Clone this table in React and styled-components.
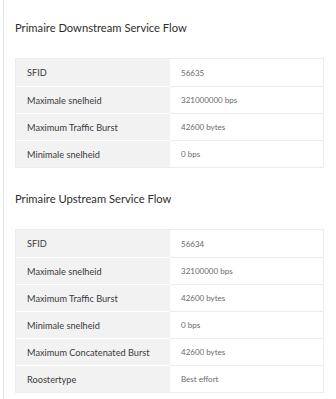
import React from "react";
import styled, { createGlobalStyle } from "styled-components";

const GlobalStyle = createGlobalStyle`
  html, body {
    margin: 0;
    padding: 0;
    background: #ffffff;
    overflow: hidden;
  }
  body {
    font-family: Lato, "Open Sans", sans-serif;
    color: #333333;
  }
`;

const Panel = styled.div`
  margin-left: 3px;
  border-left: 1px solid #e6e6e6;
  height: 399px;
  padding: 13px 12px 0 11px;
  box-sizing: border-box;
`;

const Section = styled.section`
  & + & {
    margin-top: 16px;
  }
`;

const Title = styled.h2`
  margin: 0;
  font-size: 11.2px;
  font-weight: 400;
  color: #2e2e2e;
  line-height: 30px;
  padding-bottom: 15px;
`;

const Table = styled.div`
  display: grid;
  grid-template-columns: 154px 1fr;
  border: 1px solid #ececec;
`;

const Cell = styled.div`
  height: 27px;
  display: flex;
  align-items: center;
  padding-left: 11px;
  box-sizing: border-box;
`;

const LabelCell = styled(Cell)`
  background: #f2f2f2;
  font-size: 9.2px;
  color: #3a3a3a;
  border-top: ${(p) => (p.$first ? "none" : "1px solid #ffffff")};
`;

const ValueCell = styled(Cell)`
  background: #ffffff;
  font-size: 8px;
  color: #6a6a6a;
  border-top: ${(p) => (p.$first ? "none" : "1px solid #ececec")};
`;

const downstream = [
  ["SFID", "56635"],
  ["Maximale snelheid", "321000000 bps"],
  ["Maximum Traffic Burst", "42600 bytes"],
  ["Minimale snelheid", "0 bps"],
];

const upstream = [
  ["SFID", "56634"],
  ["Maximale snelheid", "32100000 bps"],
  ["Maximum Traffic Burst", "42600 bytes"],
  ["Minimale snelheid", "0 bps"],
  ["Maximum Concatenated Burst", "42600 bytes"],
  ["Roostertype", "Best effort"],
];

const FlowTable = ({ title, rows }) => (
  <Section>
    <Title>{title}</Title>
    <Table>
      {rows.map(([label, value], i) => (
        <React.Fragment key={label}>
          <LabelCell $first={i === 0}>{label}</LabelCell>
          <ValueCell $first={i === 0}>{value}</ValueCell>
        </React.Fragment>
      ))}
    </Table>
  </Section>
);

const App = () => (
  <>
    <GlobalStyle />
    <Panel>
      <FlowTable title="Primaire Downstream Service Flow" rows={downstream} />
      <FlowTable title="Primaire Upstream Service Flow" rows={upstream} />
    </Panel>
  </>
);

export default App;
